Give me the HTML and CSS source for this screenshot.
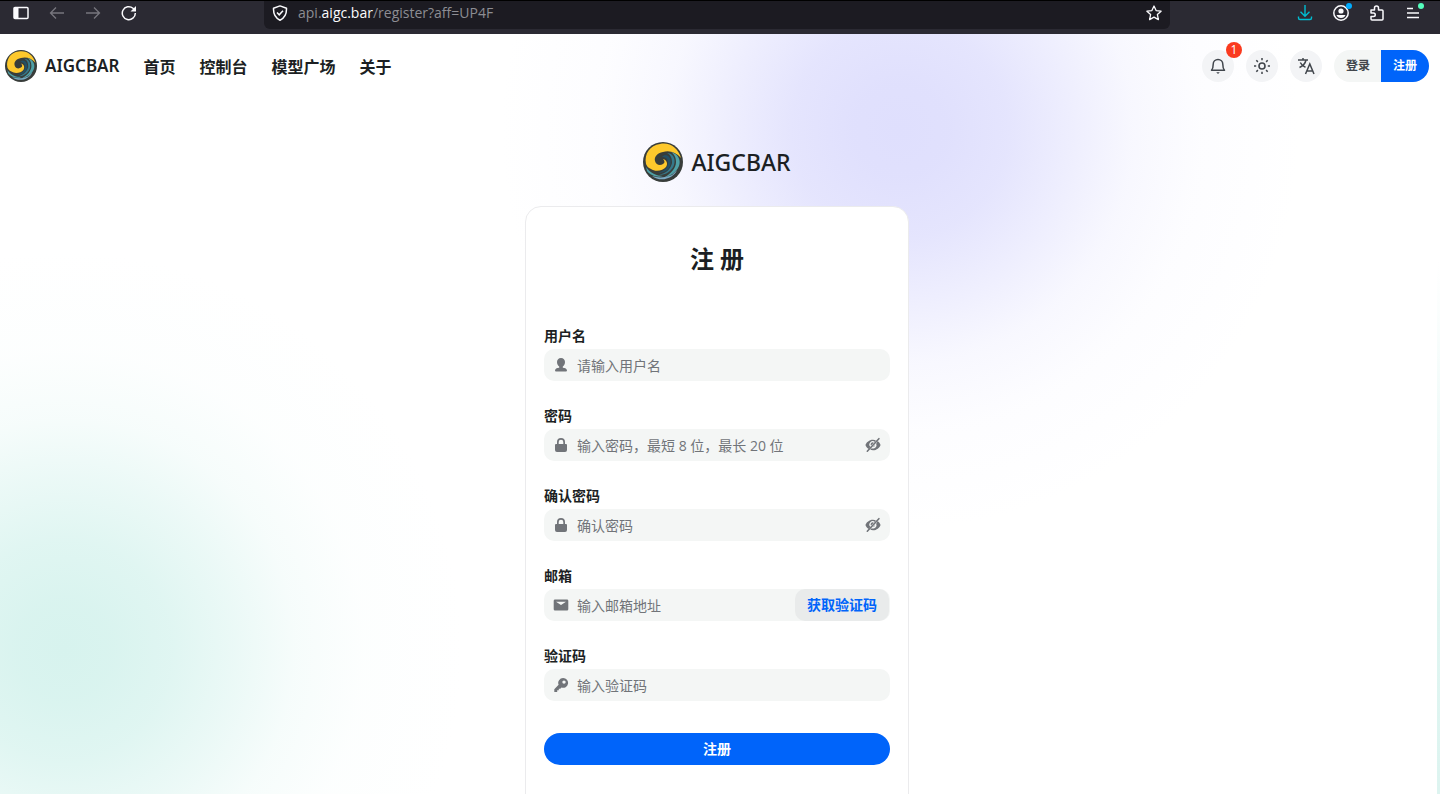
FILE: index.html
```html
<!DOCTYPE html>
<html lang="zh-CN">
<head>
    <meta charset="UTF-8">
    <meta name="viewport" content="width=device-width, initial-scale=1.0">
    <title>AIGCBAR</title>
    <link rel="stylesheet" href="styles.css">
</head>
<body>
    <svg class="defs" width="0" height="0" aria-hidden="true">
        <symbol id="logo" viewBox="0 0 40 40">
            <circle cx="20" cy="20" r="20" fill="#383d3a"/>
            <path d="M3 22C1 12 7 3 17 2C27 0 35 6 38 16C33 10 26 8 20 10C14 11 11 15 12 19C13 23 17 24 20 22C22 21 22 19 20 17C24 18 25 22 23 25C20 29 12 30 8 27C5 26 4 24 3 22Z" fill="#fdc82c"/>
            <path d="M22 13C27 13 29 19 27 24C25 29 20 31 15 31C21 29 25 26 25 21C25 17 23 15 19 15C20 14 21 13 22 13Z" fill="#235066"/>
            <path d="M24 11C30 11 33 17 31 23C29 29 23 33 16 33C24 31 28 26 29 21C29 16 28 13 24 11Z" fill="#35788a"/>
            <path d="M28 10C36 12 38 19 36 24C33 31 27 34 20 36C28 32 33 26 33 20C33 15 31 12 28 10Z" fill="#4fa0a6"/>
            <path d="M3 25C7 31 14 34 20 34C14 36 7 33 4 29Z" fill="#4fa0a6"/>
            <path d="M9 34C15 36 22 36 29 33L34 28C31 36 18 41 9 34Z" fill="#7aaac5"/>
        </symbol>
        <symbol id="lock" viewBox="0 0 16 16">
            <path d="M4 7V5a4 4 0 0 1 8 0v2h1a1 1 0 0 1 1 1v5a2 2 0 0 1-2 2H4a2 2 0 0 1-2-2V8a1 1 0 0 1 1-1zM5.700 7h4.600V5a2.300 2.300 0 0 0-4.600 0z" fill="currentColor" fill-rule="evenodd"/>
        </symbol>
        <symbol id="eye-off" viewBox="0 0 16 16">
            <path d="M10.800 3.200C9.900 2.900 9 2.700 8 2.700C4 2.700 1.700 5.500.7 7.300q-.3.700 0 1.400C1.300 9.900 2.200 11 3.500 12L5.400 10A3.400 3.400 0 0 1 10 5zM8.800 5.700A2 2 0 0 0 6 8.500zM12.600 4.100C13.900 5 14.800 6.200 15.300 7.300q.3.700 0 1.400C14.300 10.500 12 13.300 8 13.300C7 13.300 6.100 13.100 5.200 12.800L6.700 11.200A3.400 3.400 0 0 0 11.200 6.700zM9.900 7.900A2 2 0 0 1 7.900 9.900z" fill="currentColor"/>
            <path d="M2.300 14.200L13.900 1.700" stroke="currentColor" stroke-width="1.600" stroke-linecap="round"/>
        </symbol>
    </svg>

    <div class="toolbar">
        <div class="tools">
            <button class="tool" aria-label="侧边栏">
                <svg viewBox="0 0 16 16"><path d="M2 2.500h12a1 1 0 0 1 1 1v9a1 1 0 0 1-1 1H2a1 1 0 0 1-1-1v-9a1 1 0 0 1 1-1z" fill="none" stroke="currentColor" stroke-width="1.500"/><path d="M1 3h4.500v10H1z" fill="currentColor"/></svg>
            </button>
            <button class="tool dim" aria-label="后退">
                <svg viewBox="0 0 16 16"><path d="M15 8H2M7 2.500L1.500 8L7 13.500" fill="none" stroke="currentColor" stroke-width="1.300"/></svg>
            </button>
            <button class="tool dim" aria-label="前进">
                <svg viewBox="0 0 16 16"><path d="M1 8h13M9 2.500L14.500 8L9 13.500" fill="none" stroke="currentColor" stroke-width="1.300"/></svg>
            </button>
            <button class="tool" aria-label="刷新">
                <svg viewBox="0 0 16 16"><path d="M14.300 8A6.500 6.500 0 1 1 12 3.200L13.500 4.700" fill="none" stroke="currentColor" stroke-width="1.500"/><path d="M15 1v5.500H9.500z" fill="currentColor"/></svg>
            </button>
        </div>
        <div class="address">
            <svg class="address-icon" viewBox="0 0 16 16"><path d="M8 .9L14.500 3.200C14.700 8.500 13 12.800 8 15.200C3 12.800 1.300 8.500 1.500 3.200Z" fill="none" stroke="currentColor" stroke-width="1.500" stroke-linejoin="round"/><path d="M5 7.500l2.200 2.300L11 5.700" fill="none" stroke="currentColor" stroke-width="1.500"/></svg>
            <span class="url">api.<b>aigc.bar</b>/register?aff=UP4F</span>
            <button class="tool" aria-label="添加书签">
                <svg viewBox="0 0 16 16"><path d="M8 1l2.100 4.600 5 .6-3.700 3.400 1 5L8 12.100l-4.400 2.500 1-5L.9 6.200l5-.6z" fill="none" stroke="currentColor" stroke-width="1.300" stroke-linejoin="round"/></svg>
            </button>
        </div>
        <div class="tools">
            <button class="tool download" aria-label="下载">
                <svg viewBox="0 0 16 16"><path d="M8 0v11M3.500 6.700L8 11.200l4.500-4.500M1.500 11.500V13q0 1.500 1.500 1.500h10q1.500 0 1.500-1.500v-1.500" fill="none" stroke="currentColor" stroke-width="1.400"/></svg>
            </button>
            <button class="tool" aria-label="账户">
                <svg viewBox="0 0 16 16"><circle cx="8" cy="8" r="7.200" fill="none" stroke="currentColor" stroke-width="1.500"/><circle cx="8" cy="6" r="2.600" fill="currentColor"/><path d="M3.500 10h9q-1 3-4.500 3t-4.500-3z" fill="currentColor"/></svg>
                <span class="dot blue"></span>
            </button>
            <button class="tool" aria-label="扩展">
                <svg viewBox="0 0 16 16"><path d="M2 5h3.500V3a2 2 0 0 1 4 0v2H13q1 0 1 1v8q0 1-1 1H3q-1 0-1-1v-2.500h2.500a1.700 1.700 0 0 0 0-3.500H2z" fill="none" stroke="currentColor" stroke-width="1.500" stroke-linejoin="round"/></svg>
            </button>
            <button class="tool" aria-label="菜单">
                <svg viewBox="0 0 16 16"><path d="M2 3.500h6M2 8h12M2 12.500h12" fill="none" stroke="currentColor" stroke-width="1.400"/></svg>
                <span class="dot green"></span>
            </button>
        </div>
    </div>

    <div class="page">
        <header class="header">
            <a class="brand" href="#">
                <svg class="brand-logo"><use href="#logo"/></svg>
                <span>AIGCBAR</span>
            </a>
            <nav class="nav">
                <a href="#">首页</a>
                <a href="#">控制台</a>
                <a href="#">模型广场</a>
                <a href="#">关于</a>
            </nav>
            <div class="actions">
                <button class="round" aria-label="系统公告">
                    <svg viewBox="0 0 18 18"><path d="M2.500 13.200q1.700-1.700 1.700-6A4.800 4.800 0 0 1 13.800 7.200q0 4.300 1.700 6z" fill="none" stroke="currentColor" stroke-width="1.500" stroke-linejoin="round"/><path d="M7.200 15.300h3.600L9 17z" fill="currentColor"/></svg>
                    <span class="badge">1</span>
                </button>
                <button class="round" aria-label="切换主题">
                    <svg viewBox="0 0 18 18"><circle cx="9" cy="9" r="3" fill="none" stroke="currentColor" stroke-width="1.600"/><path d="M9 1v2.200M9 14.800V17M1 9h2.200M14.800 9H17M3.300 3.300l1.600 1.600M13.100 13.100l1.600 1.600M3.300 14.700l1.600-1.600M13.100 4.900l1.600-1.600" stroke="currentColor" stroke-width="1.500"/></svg>
                </button>
                <button class="round" aria-label="切换语言">
                    <svg viewBox="0 0 18 18"><path d="M1 3h10M6 1v2M2.500 10.500Q8 8 9 3M3.300 5.500Q5 9 8.500 10.300M8.500 17L12.800 7L17 17M10 14h5.700" fill="none" stroke="currentColor" stroke-width="1.500"/></svg>
                </button>
                <div class="auth">
                    <a class="login" href="#">登录</a>
                    <a class="signup" href="#">注册</a>
                </div>
            </div>
        </header>

        <main class="main">
            <div class="hero">
                <svg class="hero-logo"><use href="#logo"/></svg>
                <span>AIGCBAR</span>
            </div>
            <section class="card">
                <h1>注 册</h1>
                <form class="form">
                    <div class="field">
                        <label for="username">用户名</label>
                        <div class="control">
                            <svg viewBox="0 0 16 16"><path d="M8 1c2.500 0 4 1.700 4 4c0 2-1 3.700-2.200 4.500v1.200c2.500.2 4.200 1.200 4.200 2.800q0 1-1 1H3q-1 0-1-1c0-1.600 1.700-2.600 4.200-2.800V9.500C5 8.700 4 7 4 5c0-2.300 1.500-4 4-4z" fill="currentColor"/></svg>
                            <input id="username" type="text" placeholder="请输入用户名">
                        </div>
                    </div>
                    <div class="field">
                        <label for="password">密码</label>
                        <div class="control">
                            <svg><use href="#lock"/></svg>
                            <input id="password" type="password" placeholder="输入密码，最短 8 位，最长 20 位">
                            <button class="eye" type="button" aria-label="显示密码"><svg><use href="#eye-off"/></svg></button>
                        </div>
                    </div>
                    <div class="field">
                        <label for="password2">确认密码</label>
                        <div class="control">
                            <svg><use href="#lock"/></svg>
                            <input id="password2" type="password" placeholder="确认密码">
                            <button class="eye" type="button" aria-label="显示密码"><svg><use href="#eye-off"/></svg></button>
                        </div>
                    </div>
                    <div class="field">
                        <label for="email">邮箱</label>
                        <div class="control">
                            <svg viewBox="0 0 16 16"><path d="M2 2.500h12q1.300 0 1.300 1.300v8.400q0 1.300-1.300 1.300H2q-1.300 0-1.300-1.300V3.800Q.7 2.500 2 2.500zM3 4.800l5 3.200l5-3.200z" fill="currentColor" fill-rule="evenodd"/></svg>
                            <input id="email" type="email" placeholder="输入邮箱地址">
                            <button class="send-code" type="button">获取验证码</button>
                        </div>
                    </div>
                    <div class="field">
                        <label for="code">验证码</label>
                        <div class="control">
                            <svg viewBox="0 0 16 16"><path d="M10.200 1a4.900 4.900 0 1 1-1.700 9.500L7.300 11.700H5.800v1.600H4.200V15H1.300v-2.800L5.600 7.800A4.900 4.900 0 0 1 10.200 1zM11 3.400a1.700 1.700 0 1 0 0 3.400a1.700 1.700 0 0 0 0-3.400z" fill="currentColor" fill-rule="evenodd"/></svg>
                            <input id="code" type="text" placeholder="输入验证码">
                        </div>
                    </div>
                    <button class="submit" type="submit">注册</button>
                </form>
                <p class="hint">已有账户？ <a href="#">登录</a></p>
            </section>
        </main>
    </div>
</body>
</html>
```

FILE: styles.css
```css
* {
    box-sizing: border-box;
}

body {
    display: flex;
    flex-direction: column;
    height: 100vh;
    margin: 0;
    font-family: "Open Sans", "Noto Sans CJK SC", sans-serif;
    font-size: 14px;
    line-height: 20px;
    color: #1c1f23;
    background-color: #fff;
}

button,
input {
    font: inherit;
    color: inherit;
    background: none;
    border: none;
    padding: 0;
}

button {
    cursor: pointer;
}

a {
    color: inherit;
    text-decoration: none;
}

svg {
    display: block;
    flex: none;
}

.defs {
    position: absolute;
}

/* browser toolbar */
.toolbar {
    display: flex;
    flex: none;
    height: 34px;
    padding: 0 19px 4px 13px;
    background-color: #2b2a33;
    border-top: 1px solid #000;
    color: #fbfbfe;
}

.tools {
    display: flex;
    gap: 20px;
    padding-top: 4px;
}

.tool {
    position: relative;
    width: 16px;
    height: 16px;
}

.tool svg,
.address-icon {
    width: 16px;
    height: 16px;
}

.tool.dim {
    color: #77767e;
}

.tool.download {
    color: #00bcd0;
}

.dot {
    position: absolute;
    top: -2px;
    right: -3px;
    width: 6px;
    height: 6px;
    border-radius: 50%;
}

.dot.blue {
    background-color: #00adff;
}

.dot.green {
    background-color: #54ffbd;
}

.address {
    display: flex;
    flex: 1;
    gap: 10px;
    height: 28px;
    margin: 0 127px;
    padding: 4px 8px;
    background-color: #1c1b22;
    border-radius: 0 0 6px 6px;
}

.url {
    flex: 1;
    line-height: 16px;
    color: #8d8d93;
}

.url b {
    font-weight: 400;
    color: #fbfbfe;
}

/* page */
.page {
    position: relative;
    flex: 1;
    min-height: 0;
    padding-right: 6px;
    overflow: hidden;
    background-image:
        radial-gradient(circle 400px at 900px 96px, rgba(223, 223, 253, 1) 0%, rgba(223, 223, 253, 0.96) 12%, rgba(223, 223, 253, 0.82) 27%, rgba(223, 223, 253, 0.52) 43%, rgba(223, 223, 253, 0.23) 58%, rgba(223, 223, 253, 0.07) 75%, rgba(223, 223, 253, 0) 100%),
        radial-gradient(circle 400px at 64px 616px, rgba(215, 243, 238, 1) 0%, rgba(215, 243, 238, 0.94) 12%, rgba(215, 243, 238, 0.78) 27%, rgba(215, 243, 238, 0.5) 43%, rgba(215, 243, 238, 0.22) 58%, rgba(215, 243, 238, 0.06) 75%, rgba(215, 243, 238, 0) 100%);
}

.page::after {
    content: "";
    position: absolute;
    top: 0;
    right: 0;
    bottom: 0;
    width: 3px;
    background: linear-gradient(#fff 30%, #eefaf8 55%, #dff5f1 75%, #ddf4f0);
}

.header {
    display: flex;
    align-items: center;
    gap: 24px;
    height: 64px;
    padding: 0 5px;
}

.brand,
.hero {
    display: flex;
    align-items: center;
    gap: 8px;
    font-family: "Noto Sans", "Open Sans", sans-serif;
}

.brand {
    font-size: 17px;
    font-weight: 600;
}

.brand-logo {
    width: 32px;
    height: 32px;
}

.nav {
    display: flex;
    gap: 24px;
    padding-top: 2px;
    font-size: 16px;
    font-weight: 600;
}

.actions {
    display: flex;
    gap: 12px;
    margin-left: auto;
}

.round {
    position: relative;
    display: flex;
    align-items: center;
    justify-content: center;
    width: 32px;
    height: 32px;
    color: #41464c;
    background-color: #f3f4f6;
    border-radius: 50%;
}

.round svg {
    width: 18px;
    height: 18px;
}

.badge {
    position: absolute;
    top: -8px;
    right: -8px;
    width: 16px;
    height: 16px;
    font-size: 12px;
    line-height: 16px;
    text-align: center;
    color: #fff;
    background-color: #fa3a1e;
    border-radius: 50%;
}

.auth {
    display: flex;
    overflow: hidden;
    font-size: 12px;
    font-weight: 600;
    line-height: 32px;
    border-radius: 16px;
}

.auth a {
    padding: 0 12px;
}

.auth .login {
    padding-right: 11px;
    color: #41464c;
    background-color: #f4f6f5;
}

.signup {
    color: #fff;
    background-color: #0064fa;
}

.main {
    display: flex;
    flex-direction: column;
    align-items: center;
    padding-top: 44px;
}

.hero {
    margin-bottom: 24px;
    font-size: 23px;
    font-weight: 500;
}

.hero-logo {
    width: 40px;
    height: 40px;
}

.card {
    width: 100%;
    max-width: 384px;
    padding: 36px 18px;
    background-color: #fff;
    border: 1px solid #ebebed;
    border-radius: 16px;
}

.card h1 {
    margin: 0 0 51px;
    font-size: 24px;
    line-height: 32px;
    text-align: center;
}

.form {
    display: flex;
    flex-direction: column;
    gap: 25px;
}

.field label {
    display: block;
    margin-bottom: 3px;
    font-weight: 600;
}

.control {
    display: flex;
    align-items: center;
    gap: 8px;
    height: 32px;
    padding-left: 9px;
    color: #717479;
    background-color: #f4f6f5;
    border-radius: 10px;
}

.control svg {
    width: 16px;
    height: 16px;
}

.control input {
    flex: 1;
    min-width: 0;
    height: 32px;
    outline: none;
}

.control input::placeholder {
    color: #717479;
}

.eye {
    margin-right: 9px;
}

.send-code {
    height: 32px;
    margin-right: 1px;
    padding: 0 12px;
    font-weight: 600;
    color: #0064fa;
    background-color: #e9ebeb;
    border-radius: 10px;
}

.submit {
    height: 32px;
    margin-top: 7px;
    font-weight: 600;
    color: #fff;
    background-color: #0064fa;
    border-radius: 16px;
}

.hint {
    margin: 26px 0 0;
    text-align: center;
}

.hint a {
    font-weight: 600;
    color: #0064fa;
}
```
